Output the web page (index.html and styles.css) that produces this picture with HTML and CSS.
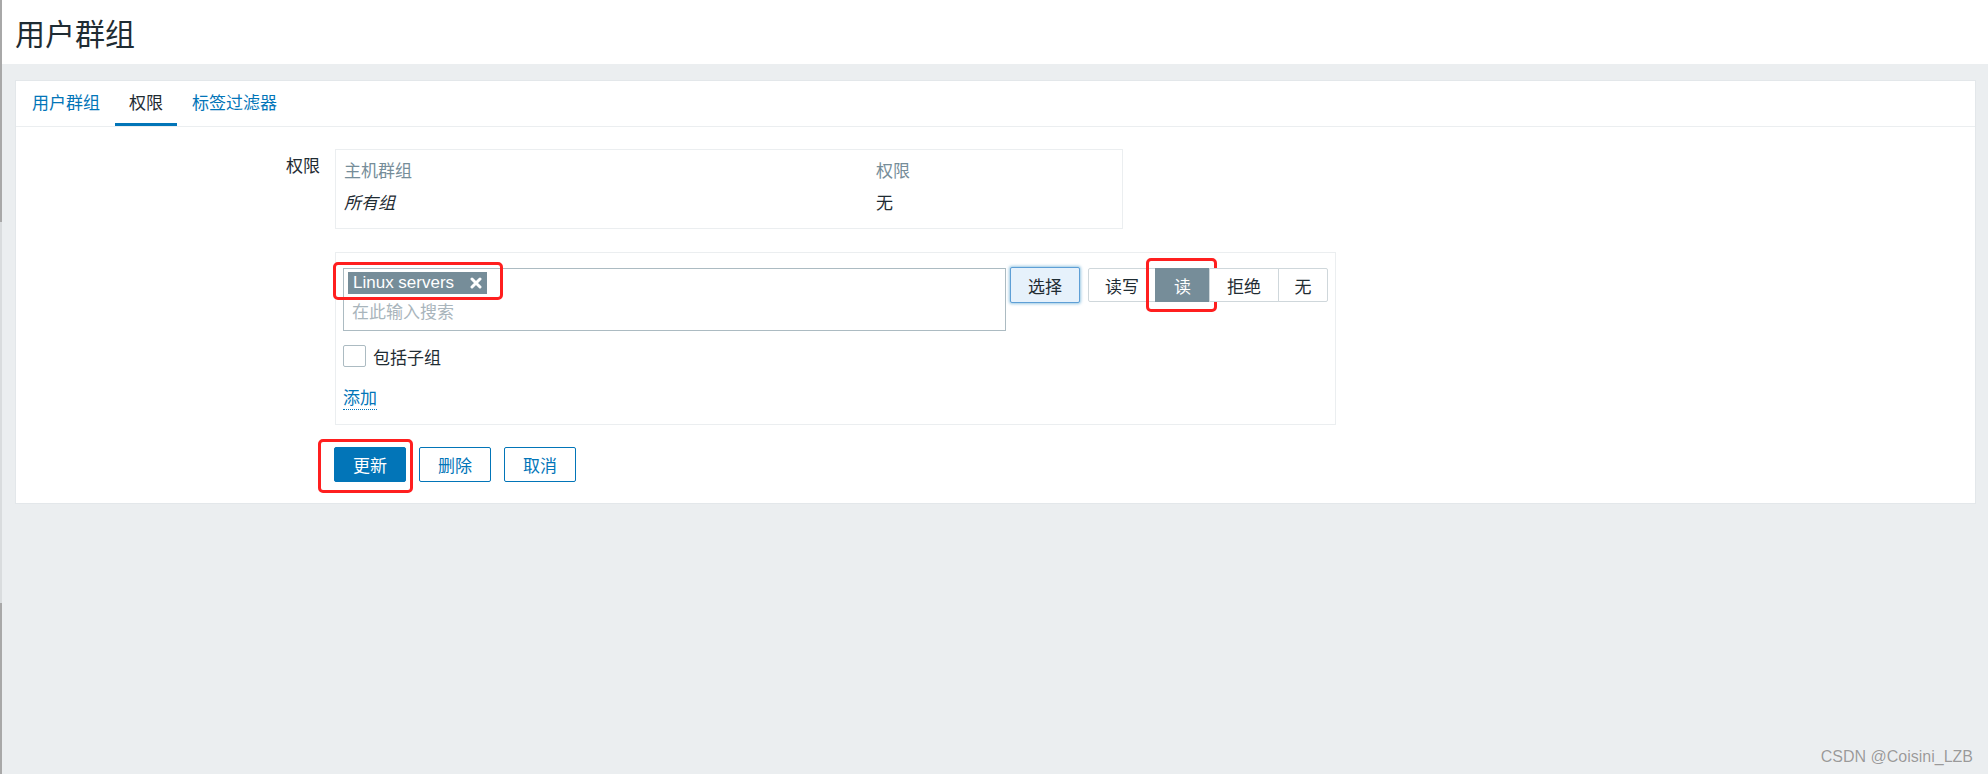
FILE: index.html
```html
<!DOCTYPE html>
<html lang="zh-CN">
<head>
    <meta charset="UTF-8">
    <title>用户群组</title>
    <link rel="stylesheet" href="styles.css">
</head>
<body>
    <div class="page-header">
        <h1>用户群组</h1>
    </div>

    <div class="content">
        <div class="card">
            <ul class="tabs">
                <li><a href="#">用户群组</a></li>
                <li class="active"><a href="#">权限</a></li>
                <li><a href="#">标签过滤器</a></li>
            </ul>

            <form class="form">
                <div class="form-row">
                    <label class="form-label">权限</label>
                    <div class="form-field">
                        <div class="perm-table">
                            <table>
                                <tr>
                                    <th class="col-group">主机群组</th>
                                    <th>权限</th>
                                </tr>
                                <tr>
                                    <td class="col-group italic">所有组</td>
                                    <td>无</td>
                                </tr>
                            </table>
                        </div>
                    </div>
                </div>

                <div class="form-row">
                    <div class="form-label"></div>
                    <div class="form-field">
                        <div class="perm-box">
                            <div class="select-row">
                                <div class="multiselect">
                                    <span class="tag">
                                        Linux servers
                                        <svg class="tag-remove" width="12" height="12" viewBox="0 0 12 12">
                                            <path d="M2 2 L10 10 M10 2 L2 10" stroke="#fff" stroke-width="3" stroke-linecap="round"/>
                                        </svg>
                                        <span class="mark mark-tag"></span>
                                    </span>
                                    <div class="placeholder">在此输入搜索</div>
                                </div>
                                <button type="button" class="btn-select">选择</button>
                                <div class="segment">
                                    <span class="seg-item seg-rw">读写</span>
                                    <span class="seg-item seg-r active">读<span class="mark mark-read"></span></span>
                                    <span class="seg-item seg-deny">拒绝</span>
                                    <span class="seg-item seg-none">无</span>
                                </div>
                            </div>

                            <div class="check-row">
                                <span class="checkbox"></span>
                                <span>包括子组</span>
                            </div>

                            <a href="#" class="link-add">添加</a>
                        </div>
                    </div>
                </div>

                <div class="form-row">
                    <div class="form-label"></div>
                    <div class="form-buttons">
                        <button type="button" class="btn btn-primary">更新<span class="mark mark-update"></span></button>
                        <button type="button" class="btn btn-alt">删除</button>
                        <button type="button" class="btn btn-alt">取消</button>
                    </div>
                </div>
            </form>
        </div>
    </div>

    <div class="watermark">CSDN @Coisini_LZB</div>
</body>
</html>
```

FILE: styles.css
```css
* {
    box-sizing: border-box;
}

html, body {
    margin: 0;
}

body {
    font-family: "Liberation Sans", Arial, "Noto Sans CJK SC", sans-serif;
    font-size: 17px;
    color: #1f2c33;
    background-color: #ebeef0;
    min-height: 774px;
    position: relative;
}

body::before {
    content: "";
    position: fixed;
    left: 0;
    top: 0;
    bottom: 0;
    width: 2px;
    background: linear-gradient(#a8a8a8 0 222px, #d9dcde 222px 603px, #a8a8a8 603px);
}

.page-header {
    height: 64px;
    background-color: #fff;
    padding: 0 15px;
    display: flex;
    align-items: center;
}

.page-header h1 {
    margin: 0;
    font-size: 30px;
    font-weight: normal;
    color: #1f2c33;
}

.content {
    padding: 16px 12px 0 15px;
}

.card {
    background-color: #fff;
    border: 1px solid #e3e7ea;
}

.tabs {
    display: flex;
    list-style: none;
    margin: 0;
    padding: 0 0 0 2px;
    height: 46px;
    border-bottom: 1px solid #ebeef0;
}

.tabs li {
    margin-right: 1px;
}

.tabs a {
    display: block;
    height: 45px;
    line-height: 45px;
    padding: 0 14px;
    color: #0275b8;
    text-decoration: none;
}

.tabs .active a {
    color: #1f2c33;
    box-shadow: inset 0 -3px 0 #0275b8;
}

.form {
    padding: 22px 0 21px;
}

.form-row {
    display: grid;
    grid-template-columns: 304px 1fr;
    column-gap: 15px;
}

.form-label {
    text-align: right;
    padding-top: 8px;
    line-height: 20px;
}

/* permissions table */
.perm-table {
    width: 788px;
    border: 1px solid #ebeef0;
    padding: 3px 8px 11px;
}

.perm-table table {
    width: 100%;
    border-collapse: collapse;
}

.perm-table th,
.perm-table td {
    height: 32px;
    padding: 0;
    text-align: left;
    font-weight: normal;
}

.perm-table th {
    color: #768d99;
}

.col-group {
    width: 532px;
}

.italic {
    font-style: italic;
}

/* add permission box */
.perm-box {
    width: 1001px;
    margin-top: 23px;
    border: 1px solid #ebeef0;
    padding: 15px 7px 14px;
}

.select-row {
    display: flex;
    align-items: flex-start;
}

.multiselect {
    flex: none;
    width: 663px;
    height: 63px;
    border: 1px solid #acbbc2;
    padding: 3px 4px;
}

.tag {
    position: relative;
    display: inline-flex;
    align-items: center;
    height: 22px;
    padding: 0 5px 0 5px;
    background-color: #768d99;
    color: #fff;
    white-space: nowrap;
}

.tag-remove {
    margin-left: 16px;
}

.placeholder {
    margin-top: 9px;
    padding-left: 4px;
    line-height: 20px;
    color: #a9b5bc;
}

.btn-select {
    flex: none;
    margin: -1px 0 0 4px;
    width: 70px;
    height: 36px;
    font: inherit;
    color: #1f2c33;
    background-color: #e6f1fb;
    border: 1px solid #5e9fd6;
    border-radius: 2px;
    box-shadow: 0 0 3px 1px rgba(2, 117, 184, 0.4);
}

.segment {
    flex: none;
    display: flex;
    margin-left: 8px;
    height: 34px;
}

.seg-item {
    position: relative;
    display: flex;
    align-items: center;
    justify-content: center;
    white-space: nowrap;
    border: 1px solid #cfd7db;
    margin-left: -1px;
    color: #1f2c33;
    background-color: #fff;
}

.seg-rw {
    width: 68px;
    margin-left: 0;
    border-radius: 2px 0 0 2px;
}

.seg-r {
    width: 55px;
}

.seg-deny {
    width: 70px;
}

.seg-none {
    width: 50px;
    border-radius: 0 2px 2px 0;
}

.seg-item.active {
    background-color: #768d99;
    border-color: #768d99;
    color: #fff;
}

.check-row {
    display: flex;
    align-items: center;
    gap: 7px;
    margin-top: 14px;
    height: 22px;
}

.checkbox {
    width: 23px;
    height: 22px;
    border: 1px solid #acbbc2;
    border-radius: 2px;
    background-color: #fff;
}

.link-add {
    display: inline-block;
    margin-top: 22px;
    line-height: 20px;
    color: #0275b8;
    text-decoration: none;
    border-bottom: 1px dotted #0275b8;
}

/* buttons */
.form-buttons {
    display: flex;
    gap: 13px;
    margin-top: 22px;
    margin-left: -1px;
}

.btn {
    position: relative;
    height: 35px;
    padding: 0 18px;
    font: inherit;
    border: 1px solid #0275b8;
    border-radius: 2px;
    cursor: pointer;
}

.btn-primary {
    background-color: #0275b8;
    color: #fff;
}

.btn-alt {
    background-color: #fff;
    color: #0275b8;
}

/* red annotation frames */
.mark {
    position: absolute;
    border: 3px solid #ff1f1f;
    border-radius: 5px;
    pointer-events: none;
}

.mark-tag {
    left: -15px;
    right: -16px;
    top: -10px;
    bottom: -6px;
}

.mark-read {
    left: -10px;
    right: -8px;
    top: -11px;
    bottom: -11px;
}

.mark-update {
    left: -17px;
    right: -8px;
    top: -9px;
    bottom: -12px;
}

.watermark {
    position: absolute;
    right: 15px;
    bottom: 8px;
    font-size: 16px;
    color: #9a9a9a;
    text-shadow: 0 0 1px #fff;
}
```
